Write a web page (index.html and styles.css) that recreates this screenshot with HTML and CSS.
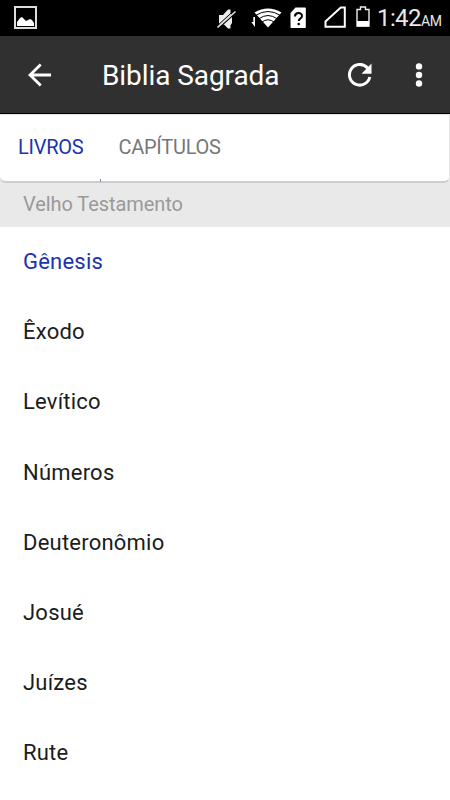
FILE: index.html
```html
<!DOCTYPE html>
<html lang="pt">
<head>
<meta charset="utf-8">
<title>Biblia Sagrada</title>
<link rel="stylesheet" href="styles.css">
</head>
<body>
<div class="status">
  <svg class="picture" width="23" height="23" viewBox="0 0 23 23"><rect x="1" y="1" width="21" height="21" fill="none" stroke="#ddd" stroke-width="2"/><path d="M3 20v-4l3-4 2-1 4 4 4-2 2 1 2 3v3z" fill="#fff"/></svg>
  <svg class="mute" width="20" height="20" viewBox="0 0 20 20"><path d="M2 6h4l5-5.500h2.500v19H11l-4-4H2zM13 4l2 3v7l-2 3z" fill="#eee"/><path d="M1 19.500L19 3.500" stroke="#000" stroke-width="1.500"/><path d="M.5 18.500L18.500 2.500" stroke="#ddd" stroke-width="1.600"/><path d="M0 17L17 1.500" stroke="#000" stroke-width="1"/></svg>
  <svg class="wifi" width="31" height="20" viewBox="0 0 31 20"><path d="M4 9v10L.3 14h2V9z" fill="#fff"/><path d="M3.500 4.500Q17 -3.500 30.500 4.500L17 19.500z" fill="#fff"/><path d="M4.500 7.500Q17 -.5 29.500 7.500M7.500 11Q17 4 26.500 11M10.500 14.500Q17 9 23.500 14.500" fill="none" stroke="#000" stroke-width="1"/></svg>
  <svg class="sim" width="17" height="22" viewBox="0 0 17 22"><path d="M5.500.5h9.500q.8 0 .8.800v19q0 .7-.8.700H1.200Q.5 21 .5 20.300V6z" fill="#fff"/><path d="M5 9.500c0-4.500 7-4.500 7-.5 0 2.500-3.200 2.600-3.200 5" fill="none" stroke="#000" stroke-width="2"/><circle cx="8.700" cy="17" r="1.300"/></svg>
  <svg class="signal" width="23" height="23" viewBox="0 0 23 23"><path d="M20.800 1.500h-4L1.500 15.500v5.300h19.300z" fill="none" stroke="#fff" stroke-width="2"/></svg>
  <svg class="battery" width="15" height="22" viewBox="0 0 15 22"><path d="M1 3.500h3.500V1h5v2.500H13V20H1z" fill="none" stroke="#eee" stroke-width="1.400"/><path d="M1 15h12v5.500H1z" fill="#fff"/></svg>
  <span class="clock">1:42</span><span class="ampm">AM</span>
</div>
<header class="bar">
  <svg class="back" width="24" height="24" viewBox="0 0 24 24"><path d="M12.700 1.500L2 12l10.700 10.500M2 12h21" fill="none" stroke="#fff" stroke-width="2.800"/></svg>
  <h1 class="title">Biblia Sagrada</h1>
  <svg class="refresh" width="24" height="24" viewBox="0 0 24 24"><path d="M19.500 5A10.300 10.300 0 1 0 21.800 14" fill="none" stroke="#fff" stroke-width="3"/><path d="M23.500.5v10.200h-10z" fill="#fff"/></svg>
  <svg class="more" width="8" height="24" viewBox="0 0 8 24"><g fill="#fff"><circle cx="4" cy="3.400" r="3.200"/><circle cx="4" cy="12" r="3.200"/><circle cx="4" cy="20.500" r="3.200"/></g></svg>
</header>
<div class="backdrop">
  <nav class="tabs"><span class="tab active">LIVROS</span><span class="tab">CAPÍTULOS</span></nav>
  <h2 class="section">Velho Testamento</h2>
</div>
<ul class="books">
  <li class="current">Gênesis</li>
  <li>Êxodo</li>
  <li>Levítico</li>
  <li>Números</li>
  <li>Deuteronômio</li>
  <li>Josué</li>
  <li>Juízes</li>
  <li>Rute</li>
</ul>
</body>
</html>
```

FILE: styles.css
```css
* { box-sizing: border-box; }
body {
  margin: 0;
  height: 800px;
  overflow: hidden;
  background: #fff;
  color: #1c1c1c;
  font-family: Roboto, sans-serif;
}
svg { display: block; flex: none; }
.status {
  display: flex;
  align-items: flex-start;
  height: 36px;
  padding: 6px 0 0 14px;
  background: #000;
  color: #e8e8e8;
}
.mute { margin: 3px 0 0 180px; }
.wifi { margin: 2px 0 0 14px; }
.sim { margin: 1px 0 0 8px; }
.signal { margin-left: 17px; }
.battery { margin-left: 9px; }
.clock { margin: -1px 0 0 6px; font-size: 24px; line-height: 27px; width: 43px; letter-spacing: -0.600px; white-space: nowrap; }
.ampm { margin: 7px 0 0 1px; font-size: 14px; line-height: 17px; letter-spacing: -0.500px; }
.bar {
  display: flex;
  align-items: center;
  height: 78px;
  padding: 0 27px 0 28px;
  background: #303030;
  border-bottom: 1px solid #000;
  color: #fff;
}
.title { flex: 1; margin: 2px 0 0 50px; font-size: 28px; line-height: 34px; font-weight: 400; letter-spacing: -0.080px; }
.more { margin-left: 43px; }
.backdrop { height: 113px; background: #e9e9e9; }
.tabs {
  display: flex;
  height: 69px;
  padding: 0 18px;
  gap: 35px;
  line-height: 64px;
  background: #fff;
  border: 1px solid #e4e4e4;
  border-left: 0;
  border-bottom: 2px solid #cdcdcd;
  border-radius: 0 0 6px 6px;
}
.tab { font-size: 20px; letter-spacing: -0.250px; color: #777; }
.active { position: relative; color: #1c32ae; }
.active::after {
  content: "";
  position: absolute;
  left: 82px;
  bottom: -1px;
  width: 1px;
  height: 3px;
  background: #7b86c8;
}
.section { margin: 0; padding-left: 23px; font-size: 20px; line-height: 43px; font-weight: 400; letter-spacing: -0.080px; color: #999; }
.books { margin: 0; padding: 0 0 0 23px; list-style: none; }
.books li { height: 70.200px; font-size: 22px; line-height: 70px; letter-spacing: 0.220px; }
.books .current { color: #1c32ae; }
```
